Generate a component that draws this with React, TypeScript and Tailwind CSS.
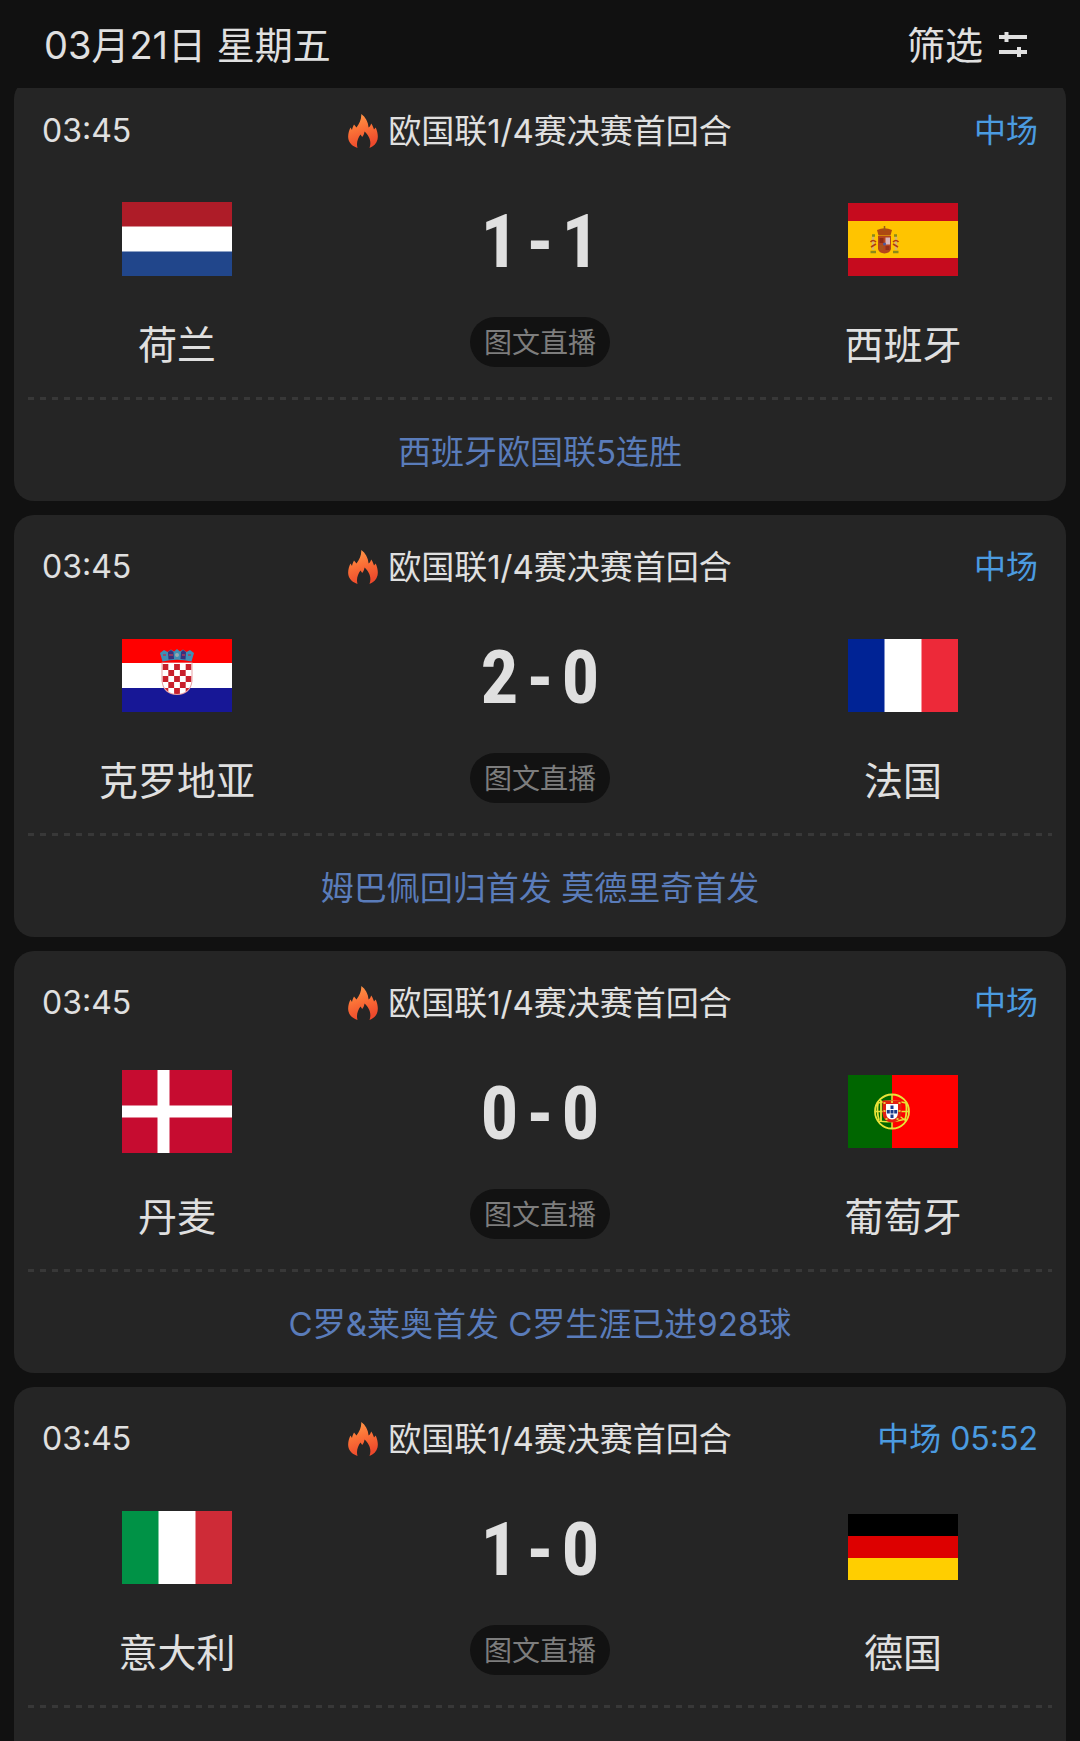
import React from 'react';

interface Team {
  name: string;
  flag: React.ReactNode;
}

interface Match {
  time: string;
  stage: string;
  status: string;
  home: Team;
  away: Team;
  score: [number, number];
  note: string;
}

function Netherlands() {
  return (
    <svg viewBox="0 0 110 74" className="w-[110px]" role="img" aria-label="荷兰国旗">
      <rect width="110" height="74" fill="#fff" />
      <rect width="110" height="24.5" fill="#ae1c28" />
      <rect y="49.5" width="110" height="24.5" fill="#21468b" />
    </svg>
  );
}

function Spain() {
  return (
    <svg viewBox="0 0 110 73" className="w-[110px]" role="img" aria-label="西班牙国旗">
      <rect width="110" height="73" fill="#c60b1e" />
      <rect y="18" width="110" height="37" fill="#ffc400" />
      <path d="M29 27 Q36.5 23.500 44 27 L42.500 32.500 H30.500 Z" fill="#ad4a12" />
      <path d="M36.500 23 V28" stroke="#9a5a14" strokeWidth="1.500" />
      <path d="M30 33 H43 V46 Q42 50 36.500 50.500 Q31 50 30 46 Z" fill="#b4451c" />
      <rect x="31.500" y="35" width="4" height="5" fill="#8e2a14" />
      <rect x="37.500" y="34.500" width="4.500" height="7" fill="#d9b4b8" />
      <rect x="31.500" y="42" width="4" height="5" fill="#a8521c" />
      <rect x="37.500" y="43" width="4" height="4" fill="#93301a" />
      <circle cx="36.500" cy="41" r="1.500" fill="#4a5aa0" />
      <path d="M25 33 V47 M48 33 V47" stroke="#d8b56a" strokeWidth="2.500" />
      <path d="M22.500 39 Q25 36 28 39 M50.500 39 Q48 36 45 39 M23 44 L28 41 M50 44 L45 41" stroke="#b23a12" strokeWidth="1.500" fill="none" />
      <path d="M22.500 49 H28 M45 49 H50.500 M24 32.500 H27 M46 32.500 H49" stroke="#8c8a18" strokeWidth="2.500" />
    </svg>
  );
}

function Croatia() {
  // 5x5 chequerboard, red first
  const squares = Array.from({ length: 25 }, (_, i) => i).filter((i) => i % 2 === 0);
  return (
    <svg viewBox="0 0 110 73" className="w-[110px]" role="img" aria-label="克罗地亚国旗">
      <defs>
        <clipPath id="hr-shield">
          <path d="M40.500 24 H69.500 V42 Q68 54.500 55 55 Q42 54.500 40.500 42 Z" />
        </clipPath>
      </defs>
      <rect width="110" height="73" fill="#fff" />
      <rect width="110" height="24" fill="#ff0000" />
      <rect y="49" width="110" height="24" fill="#171796" />
      <path d="M39.500 23.500 H70.500 V42 Q69 55.500 55 56 Q41 55.500 39.500 42 Z" fill="#e8a0a4" />
      <g clipPath="url(#hr-shield)">
        <rect x="40" y="24" width="30" height="32" fill="#fff" />
        {squares.map((i) => (
          <rect key={i} x={40.5 + (i % 5) * 5.8} y={25 + Math.floor(i / 5) * 6} width="5.800" height="6" fill="#c8202c" />
        ))}
      </g>
      <path d="M38 14 L42 11 L45.500 13 L49 10.500 L52 12.500 L55 10 L58 12.500 L61 10.500 L64.500 13 L68 11 L72 14 L69.500 22.500 Q55 19 40.500 22.500 Z" fill="#3f8fb5" />
      <path d="M46 13 L49 11 L51.500 13 L52 20 L46.500 20.500 Z M59 13 L61 11 L64 13 L63.500 20.500 L58.500 20 Z" fill="#3a2f7d" />
      <path d="M41 16 H44 M47 16 H51 M60 16 H63 M66 16 H69" stroke="#b03a58" strokeWidth="1.500" />
      <circle cx="55" cy="16" r="2" fill="#9aa8b0" />
    </svg>
  );
}

function France() {
  return (
    <svg viewBox="0 0 110 73" className="w-[110px]" role="img" aria-label="法国国旗">
      <rect width="110" height="73" fill="#fff" />
      <rect width="36.500" height="73" fill="#002395" />
      <rect x="73.500" width="36.500" height="73" fill="#ed2939" />
    </svg>
  );
}

function Denmark() {
  return (
    <svg viewBox="0 0 110 83" className="w-[110px]" role="img" aria-label="丹麦国旗">
      <rect width="110" height="83" fill="#c60c30" />
      <path d="M35.500 0 H47.500 V35.500 H110 V47.500 H47.500 V83 H35.500 V47.500 H0 V35.500 H35.500 Z" fill="#fff" />
    </svg>
  );
}

function Portugal() {
  return (
    <svg viewBox="0 0 110 73" className="w-[110px]" role="img" aria-label="葡萄牙国旗">
      <rect width="110" height="73" fill="#ff0000" />
      <rect width="44" height="73" fill="#006600" />
      <g fill="none" stroke="#e8e337">
        <circle cx="44" cy="36.500" r="17" strokeWidth="1.800" />
        <path d="M27.500 36.500 H60.500 M44 19.500 V53.500" strokeWidth="1.500" />
        <path d="M32 25 Q44 36 58 46 M30 46 Q44 48 58 44 M30 28 Q44 24 58 28" strokeWidth="1.500" />
        <path d="M30 28 Q28.500 36 31 45 M33 26 V47 M58 28 Q59.500 36 57 45" strokeWidth="1.800" />
      </g>
      <path d="M34.500 25.500 H53.500 V38 Q53 47 44 47.500 Q35 47 34.500 38 Z" fill="#e3200f" />
      <g fill="#e8c837">
        <rect x="35.500" y="27" width="2" height="2" />
        <rect x="43" y="26" width="2" height="2" />
        <rect x="50.500" y="27" width="2" height="2" />
        <rect x="35.500" y="35" width="2" height="2" />
        <rect x="50.500" y="35" width="2" height="2" />
        <rect x="37.500" y="43" width="2" height="2" />
        <rect x="48.500" y="43" width="2" height="2" />
      </g>
      <path d="M38 29 H50 V38 Q49.500 44 44 44.500 Q38.500 44 38 38 Z" fill="#fff" />
      <g fill="#1a3a8a">
        <rect x="42.500" y="30.500" width="3" height="3.500" />
        <rect x="38.800" y="35" width="3" height="3.500" />
        <rect x="42.500" y="35" width="3" height="3.500" />
        <rect x="46.200" y="35" width="3" height="3.500" />
        <rect x="42.500" y="39.500" width="3" height="3.500" />
      </g>
    </svg>
  );
}

function Italy() {
  return (
    <svg viewBox="0 0 110 73" className="w-[110px]" role="img" aria-label="意大利国旗">
      <rect width="110" height="73" fill="#fff" />
      <rect width="36.500" height="73" fill="#009246" />
      <rect x="73.500" width="36.500" height="73" fill="#ce2b37" />
    </svg>
  );
}

function Germany() {
  return (
    <svg viewBox="0 0 110 66" className="w-[110px]" role="img" aria-label="德国国旗">
      <rect width="110" height="66" fill="#ffce00" />
      <rect width="110" height="44" fill="#dd0000" />
      <rect width="110" height="22" fill="#000" />
    </svg>
  );
}

function FlameIcon() {
  return (
    <svg viewBox="0 0 30 34" className="h-[34px] w-[30px] shrink-0" aria-hidden="true">
      <defs>
        <linearGradient id="flame" x1="0" y1="0" x2="0.300" y2="1">
          <stop offset="0" stopColor="#ffa04c" />
          <stop offset="0.500" stopColor="#fb7237" />
          <stop offset="1" stopColor="#ee4a2c" />
        </linearGradient>
      </defs>
      <path
        fill="url(#flame)"
        d="M13.300 0 C17.500 3 20 7.500 20.600 13.500 C22 12.500 22.800 11 23.200 9.500 C25 12 25.500 14 26 15.500 L27.700 13.500 C29.500 17.500 30.300 21.500 29.500 25.500 C28.600 29.500 25.500 32.500 21.500 34 C23 30 22.500 26 20.500 22.500 C19.500 20.500 18 18.500 16.500 17.500 C16.300 19.500 15.500 21.500 14.200 23 L12.500 20.500 C10 24 8 28.500 9.500 34 C5 32.500 1.500 29.500 .5 25.500 C-.5 21.500 .8 17 2.500 13.500 L4 16 C4.500 13.500 5.200 12 6 10.500 L8.500 13.500 C11.500 9.500 13.500 5 13.300 0 Z"
      />
    </svg>
  );
}

function FilterIcon() {
  return (
    <svg viewBox="0 0 28 26" className="h-[26px] w-[28px]" fill="none" stroke="#e0e0e0" strokeWidth="4" aria-hidden="true">
      <path d="M0 5 H28 M7.500 0 V10 M0 20 H28 M20 15 V25" />
    </svg>
  );
}

const stage = '欧国联1/4赛决赛首回合';

const matches: Match[] = [
  {
    time: '03:45',
    stage,
    status: '中场',
    home: { name: '荷兰', flag: <Netherlands /> },
    away: { name: '西班牙', flag: <Spain /> },
    score: [1, 1],
    note: '西班牙欧国联5连胜',
  },
  {
    time: '03:45',
    stage,
    status: '中场',
    home: { name: '克罗地亚', flag: <Croatia /> },
    away: { name: '法国', flag: <France /> },
    score: [2, 0],
    note: '姆巴佩回归首发 莫德里奇首发',
  },
  {
    time: '03:45',
    stage,
    status: '中场',
    home: { name: '丹麦', flag: <Denmark /> },
    away: { name: '葡萄牙', flag: <Portugal /> },
    score: [0, 0],
    note: 'C罗&莱奥首发 C罗生涯已进928球',
  },
  {
    time: '03:45',
    stage,
    status: '中场 05:52',
    home: { name: '意大利', flag: <Italy /> },
    away: { name: '德国', flag: <Germany /> },
    score: [1, 0],
    note: '',
  },
];

function TeamColumn({ team }: { team: Team }) {
  return (
    <div className="flex flex-col items-center">
      <div className="flex h-[116px] items-center">{team.flag}</div>
      <span className="mt-6 text-[39px] leading-[48px]">{team.name}</span>
    </div>
  );
}

function MatchCard({ match }: { match: Match }) {
  return (
    <article className="flex h-[422px] flex-col rounded-[20px] bg-[#252525]">
      <div className="grid h-[102px] grid-cols-[1fr_auto_1fr] items-center px-7 pt-[2px] text-[32px] leading-10">
        <time>{match.time}</time>
        <div className="flex items-center gap-[10px]">
          <FlameIcon />
          <h2 className="text-[33px]">{match.stage}</h2>
        </div>
        <span className="text-right text-[#4b9be0]">{match.status}</span>
      </div>

      <div className="grid h-[216px] grid-cols-[31fr_38fr_31fr]">
        <TeamColumn team={match.home} />
        <div className="flex flex-col items-center">
          <div className="flex h-[116px] items-center gap-2 pt-1 font-['Roboto_Condensed','Liberation_Sans_Narrow',Roboto,sans-serif] text-[75px] leading-none font-bold">
            <span>{match.score[0]}</span>
            <span>-</span>
            <span>{match.score[1]}</span>
          </div>
          <button type="button" className="mt-5 h-[50px] rounded-full bg-[#121212] px-[14px] pt-[2px] text-[28px] leading-none text-[#7d7d7d]">
            图文直播
          </button>
        </div>
        <TeamColumn team={match.away} />
      </div>

      <div className="mx-[14px] h-[3px] bg-[repeating-linear-gradient(90deg,#383838_0_6px,transparent_6px_12px)]" />

      <div className="flex flex-1 items-center justify-center pt-[2px]">
        <a href="#" className="text-[33px] leading-10 text-[#5a7cba]">
          {match.note}
        </a>
      </div>
    </article>
  );
}

export default function App() {
  return (
    <div className="h-screen overflow-hidden bg-[#111] font-[Inter,'Noto_Sans_CJK_SC',sans-serif] text-[#e0e0e0]" lang="zh-CN">
      <header className="relative z-10 flex h-[88px] items-center justify-between bg-[#111] pt-[2px] pr-[53px] pl-11 text-[38px]">
        <h1>03月21日 星期五</h1>
        <button type="button" className="flex items-center gap-4">
          筛选
          <FilterIcon />
        </button>
      </header>
      {/* first card is scrolled slightly under the header */}
      <main className="-mt-[9px] flex flex-col gap-[14px] px-[14px]">
        {matches.map((match) => (
          <MatchCard key={match.home.name} match={match} />
        ))}
      </main>
    </div>
  );
}
